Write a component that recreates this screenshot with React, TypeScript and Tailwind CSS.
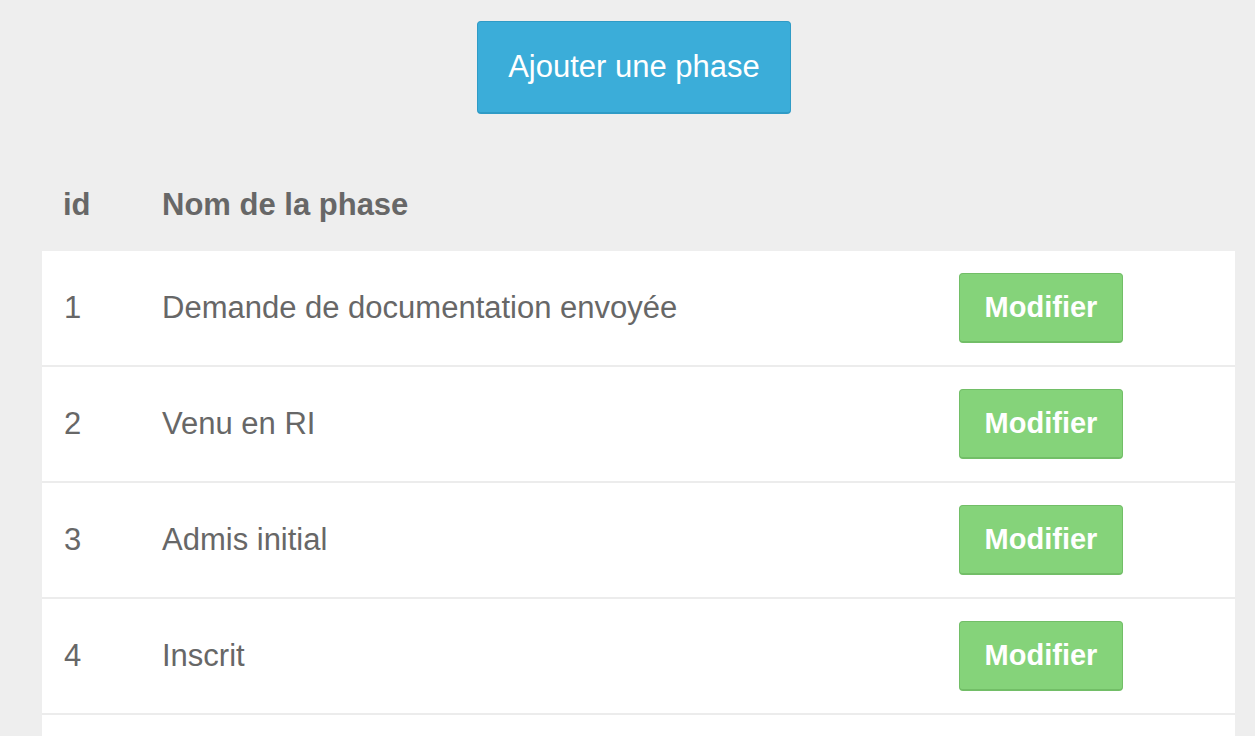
const phases = [
  { id: 1, name: "Demande de documentation envoyée" },
  { id: 2, name: "Venu en RI" },
  { id: 3, name: "Admis initial" },
  { id: 4, name: "Inscrit" },
];

export default function App() {
  return (
    <div className="h-screen overflow-hidden bg-[#eeeeee] font-['Liberation_Sans',Arial,sans-serif] text-[#676767]">
      <div className="pt-[21px]">
        <button className="ml-[477px] h-[93px] w-[314px] rounded-[4px] border border-[#2f9bc6] border-b-2 bg-[#3badd9] text-[31px] text-white">
          Ajouter une phase
        </button>
      </div>

      <div className="ml-[42px] mr-[20px]">
        {/* header */}
        <div className="flex h-[137px] items-center pt-[46px] text-[31px] font-bold">
          <div className="w-[100px] pl-[21px]">id</div>
          <div className="pl-[20px]">Nom de la phase</div>
        </div>

        {/* rows */}
        {phases.map((p) => (
          <div
            key={p.id}
            className="flex h-[116px] items-center border-b-2 border-[#ececec] bg-white text-[31px]"
          >
            <div className="w-[100px] pl-[22px]">{p.id}</div>
            <div className="w-[772px] pl-[20px]">{p.name}</div>
            <div className="pl-[45px]">
              <button className="h-[70px] w-[164px] rounded-[4px] border border-[#72be67] border-b-2 bg-[#85d37a] text-[29px] font-bold text-white">
                Modifier
              </button>
            </div>
          </div>
        ))}
        <div className="h-[116px] bg-white" />
      </div>
    </div>
  );
}
